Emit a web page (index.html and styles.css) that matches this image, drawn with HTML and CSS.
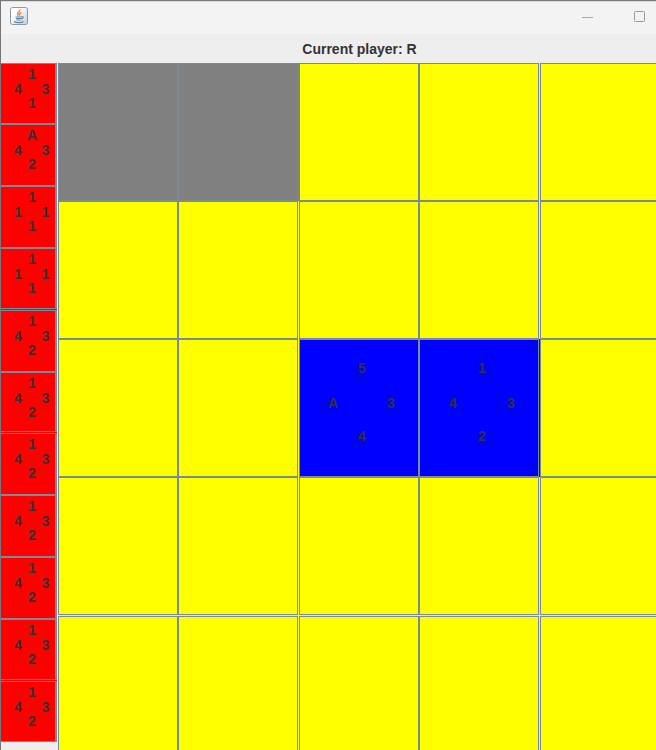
FILE: index.html
```html
<!DOCTYPE html>
<html lang="en">
<head>
<meta charset="utf-8">
<title>Tile game</title>
<link rel="stylesheet" href="styles.css">
</head>
<body>
<div class="window">
  <header class="titlebar">
    <svg class="app-icon" width="20" height="20" viewBox="0 0 20 20" aria-hidden="true">
      <defs><linearGradient id="tile" x1="0" y1="0" x2="1" y2="1"><stop offset="0.3" stop-color="#ffffff"/><stop offset="1" stop-color="#c3d0da"/></linearGradient></defs>
      <rect x="1.500" y="0.500" width="17" height="17" rx="2" fill="url(#tile)" stroke="#8799a8"/>
      <path d="M11 2.500C11.500 5 7 5.500 9 8.500M12.500 5.500C10 6.500 10 7.500 10.500 9" fill="none" stroke="#ee9350" stroke-width="1.500"/>
      <path d="M6.500 10H12.500M7 11.500H12M7.500 13H11.500M12.500 9.500C15 9.500 14.500 11.500 12 12M5 14.500C7 16 12.500 16 14.500 14.500" fill="none" stroke="#6485a0" stroke-width="1.200"/>
    </svg>
    <div class="controls">
      <button class="control" aria-label="Minimize"><svg width="12" height="12" viewBox="0 0 12 12"><path d="M0 6.500H11" stroke="#a9a9a9"/></svg></button>
      <button class="control" aria-label="Maximize"><svg width="12" height="12" viewBox="0 0 12 12"><rect x="0.500" y="0.500" width="10" height="10" rx="1" fill="none" stroke="#999999"/></svg></button>
    </div>
  </header>
  <p class="status">Current player: R</p>
  <main class="game">
    <div class="hand">
      <button class="card"><span class="n">1</span><span class="w">4</span><span class="e">3</span><span class="s">1</span></button>
      <button class="card"><span class="n">A</span><span class="w">4</span><span class="e">3</span><span class="s">2</span></button>
      <button class="card"><span class="n">1</span><span class="w">1</span><span class="e">1</span><span class="s">1</span></button>
      <button class="card split"><span class="n">1</span><span class="w">1</span><span class="e">1</span><span class="s">1</span></button>
      <button class="card"><span class="n">1</span><span class="w">4</span><span class="e">3</span><span class="s">2</span></button>
      <button class="card split"><span class="n">1</span><span class="w">4</span><span class="e">3</span><span class="s">2</span></button>
      <button class="card"><span class="n">1</span><span class="w">4</span><span class="e">3</span><span class="s">2</span></button>
      <button class="card"><span class="n">1</span><span class="w">4</span><span class="e">3</span><span class="s">2</span></button>
      <button class="card"><span class="n">1</span><span class="w">4</span><span class="e">3</span><span class="s">2</span></button>
      <button class="card split"><span class="n">1</span><span class="w">4</span><span class="e">3</span><span class="s">2</span></button>
      <button class="card"><span class="n">1</span><span class="w">4</span><span class="e">3</span><span class="s">2</span></button>
    </div>
    <div class="board">
      <button class="cell blocked"></button><button class="cell blocked"></button><button class="cell"></button><button class="cell"></button><button class="cell"></button>
      <button class="cell"></button><button class="cell"></button><button class="cell"></button><button class="cell"></button><button class="cell"></button>
      <button class="cell"></button><button class="cell"></button>
      <button class="cell placed"><span class="n">5</span><span class="w">A</span><span class="e">3</span><span class="s">4</span></button>
      <button class="cell placed"><span class="n">1</span><span class="w">4</span><span class="e">3</span><span class="s">2</span></button>
      <button class="cell"></button>
      <button class="cell"></button><button class="cell"></button><button class="cell"></button><button class="cell"></button><button class="cell"></button>
      <button class="cell"></button><button class="cell"></button><button class="cell"></button><button class="cell"></button><button class="cell"></button>
    </div>
  </main>
</div>
</body>
</html>
```
FILE: styles.css
```css
* {
  box-sizing: border-box;
}

body {
  margin: 0;
  overflow: hidden;
  background: #eeeeee;
  color: #333333;
  font: bold 14px/16px "Liberation Sans", Arial, sans-serif;
}

button {
  margin: 0;
  padding: 0;
  border: 0;
  color: inherit;
  font: inherit;
}

.window {
  display: flex;
  flex-direction: column;
  height: 100vh;
  overflow: hidden;
  border-top: 1px solid #777777;
  border-left: 1px solid #777777;
}

.titlebar {
  display: flex;
  flex: none;
  align-items: center;
  justify-content: space-between;
  height: 33px;
  padding: 0 10px 2px 8px;
  border-top: 1px solid #dddddd;
  background: #f3f3f3;
}

.controls {
  display: flex;
  gap: 40px;
}

.control {
  display: flex;
  width: 12px;
  background: none;
}

.status {
  flex: none;
  margin: 0;
  padding: 7px 0 6px 62px;
  text-align: center;
}

.game {
  display: flex;
  flex: 1;
  min-height: 0;
}

.hand {
  display: grid;
  flex: none;
  grid-template-rows: 61px repeat(4, 62px) 61px repeat(4, 62px) 61px;
  width: 57px;
  padding-right: 1px;
}

.card,
.cell {
  display: grid;
  border: 1px solid #7a8a99;
}

.card {
  grid-template: 15px 15px 14px / 14px 14px 13px;
  align-content: start;
  justify-content: start;
  padding: 2px 0 0 10px;
  border-left-width: 0;
  border-right-width: 2px;
  background: #ff0000;
}

.split {
  margin-bottom: 1px;
  box-shadow: 0 1px #ff0000;
}

.board {
  display: grid;
  flex: 1;
  grid-template-columns: minmax(120px, 1fr) minmax(120px, 1fr) minmax(121px, 1fr) minmax(120px, 1fr) minmax(121px, 1fr);
  grid-template-rows: repeat(4, minmax(138px, 1fr)) minmax(139px, 1fr);
  background: #ffff00;
}

.cell {
  background: #ffff00;
}

.cell:nth-child(5n + 3),
.cell:nth-child(5n) {
  margin-left: 1px;
}

.cell:nth-child(n + 21) {
  margin-top: 1px;
}

.cell.blocked {
  background: #808080;
}

.cell.blocked:nth-child(2) {
  box-shadow: 1px 0 #808080;
}

.cell.placed {
  grid-template: 34px 36px 30px / repeat(3, 29px);
  align-content: start;
  justify-content: center;
  padding-top: 11px;
  padding-left: 6px;
  background: #0000ff;
}

.cell.placed:nth-child(14) {
  box-shadow: 1px 0 #0000ff;
}

.n,
.w,
.e,
.s {
  align-self: center;
  justify-self: center;
}

.n {
  grid-area: 1 / 2;
}

.w {
  grid-area: 2 / 1;
}

.e {
  grid-area: 2 / 3;
}

.s {
  grid-area: 3 / 2;
}
```
